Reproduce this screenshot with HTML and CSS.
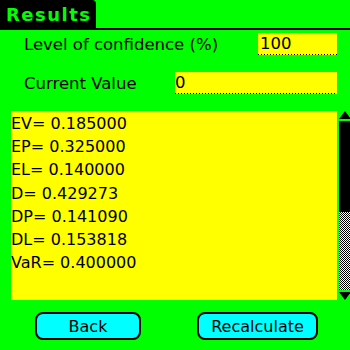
FILE: index.html
```html
<!DOCTYPE html>
<html>
<head>
<meta charset="utf-8">
<link rel="stylesheet" href="styles.css">
</head>
<body>
<div class="screen">
  <div class="titlebar"><div class="tab">Results</div></div>
  <div class="row row1">
    <span class="label label1">Level of confidence (%)</span>
    <span class="field field-short">100</span>
  </div>
  <div class="row row2">
    <span class="label label2">Current Value</span>
    <span class="field field-long">0</span>
  </div>
  <div class="output">
    <div class="text">
      <div>EV= 0.185000</div>
      <div>EP= 0.325000</div>
      <div>EL= 0.140000</div>
      <div>D= 0.429273</div>
      <div>DP= 0.141090</div>
      <div>DL= 0.153818</div>
      <div>VaR= 0.400000</div>
    </div>
    <div class="scrollbar">
      <div class="arrow-up"></div>
      <div class="thumb"></div>
      <div class="track"></div>
      <div class="arrow-down"></div>
    </div>
  </div>
  <div class="buttons">
    <button class="btn btn-back">Back</button>
    <button class="btn btn-recalc">Recalculate</button>
  </div>
</div>
</body>
</html>
```
FILE: styles.css
```css
html, body {
  margin: 0;
  padding: 0;
  background: #00ff00;
}
.screen {
  width: 350px;
  height: 350px;
  display: flex;
  flex-direction: column;
  font-family: "DejaVu Sans", Verdana, sans-serif;
  color: #000;
  overflow: hidden;
}
.titlebar {
  height: 28px;
  border-bottom: 2px solid #000;
  display: flex;
}
.tab {
  background: #000;
  color: #00ff00;
  width: 96px;
  height: 28px;
  border-top-right-radius: 4px;
  font-weight: bold;
  font-size: 18px;
  letter-spacing: 1.5px;
  line-height: 30px;
  padding-left: 6px;
  box-sizing: border-box;
}
.row {
  display: flex;
  align-items: center;
  height: 22px;
  font-size: 16.5px;
}
.row1 { margin-top: 3px; }
.row2 { margin-top: 17px; }
.label {
  padding-left: 24px;
  box-sizing: border-box;
  white-space: nowrap;
}
.label1 { width: 258px; }
.label2 { width: 175px; }
.field {
  background-color: #ffff00;
  background-image: repeating-linear-gradient(to right, #000 0 1px, transparent 1px 3px);
  background-size: 100% 1px;
  background-position: left bottom;
  background-repeat: no-repeat;
  height: 22px;
  line-height: 22px;
  box-sizing: border-box;
  padding-left: 2px;
}
.field-short { width: 79px; }
.field-long { width: 162px; padding-left: 0; }
.output {
  margin-top: 17px;
  height: 189px;
  display: flex;
  margin-left: 11px;
}
.text {
  background: #ffff00;
  width: 326px;
  padding-top: 1px;
  font-size: 16px;
  line-height: 23.2px;
  box-sizing: border-box;
}
.scrollbar {
  margin-left: 2px;
  width: 11px;
  display: flex;
  flex-direction: column;
}
.arrow-up {
  width: 0;
  height: 0;
  border-left: 6px solid transparent;
  border-right: 6px solid transparent;
  border-bottom: 8px solid #000;
  margin-bottom: 2px;
}
.thumb {
  background: #000;
  height: 91px;
}
.track {
  height: 78px;
  background-color: #fff;
  background-image:
    linear-gradient(45deg, #000 25%, transparent 25%, transparent 75%, #000 75%),
    linear-gradient(45deg, #000 25%, transparent 25%, transparent 75%, #000 75%);
  background-size: 2px 2px;
  background-position: 0 0, 1px 1px;
}
.arrow-down {
  margin-top: 2px;
  width: 0;
  height: 0;
  border-left: 6px solid transparent;
  border-right: 6px solid transparent;
  border-top: 8px solid #000;
}
.buttons {
  margin-top: 12px;
  display: flex;
}
.btn {
  background: #00ffff;
  border: 2px solid #000;
  border-radius: 8px;
  height: 28px;
  font-family: "DejaVu Sans", Verdana, sans-serif;
  font-size: 16px;
  padding: 0;
  color: #000;
}
.btn-back {
  margin-left: 35px;
  width: 106px;
}
.btn-recalc {
  margin-left: 56px;
  width: 121px;
}
```
